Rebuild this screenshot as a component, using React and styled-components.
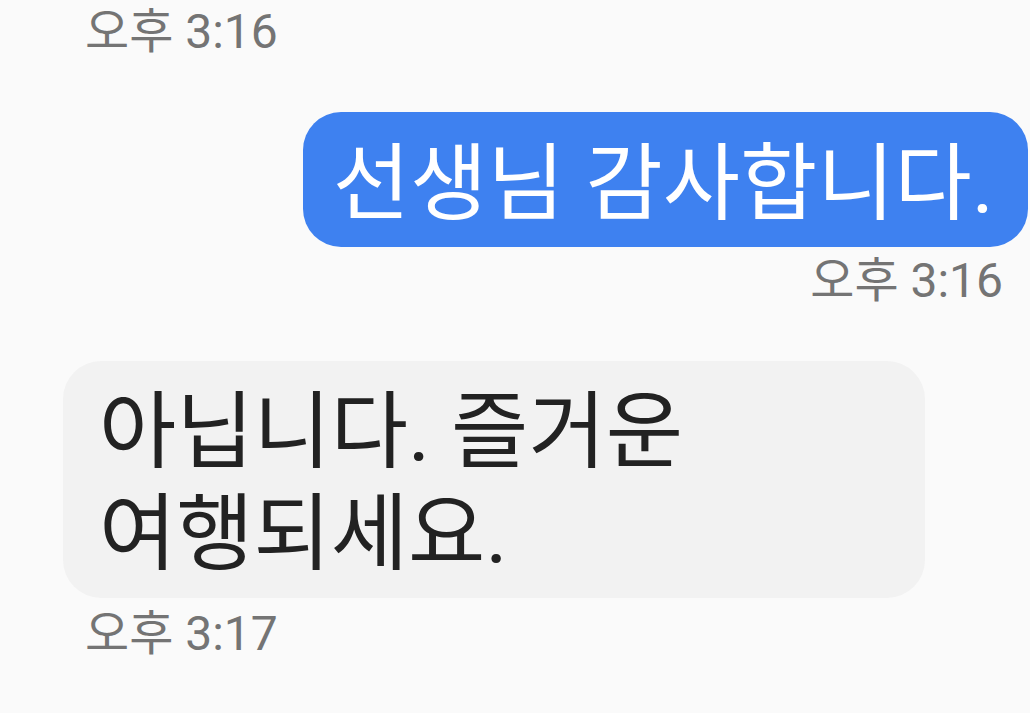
import React from "react";
import styled, { createGlobalStyle } from "styled-components";

const Global = createGlobalStyle`
  html, body { margin: 0; padding: 0; background: #fafafa; }
  body { font-family: Roboto, "Noto Sans CJK KR", sans-serif; }
`;

const Page = styled.div`
  width: 1030px;
  height: 713px;
  overflow: hidden;
  background: #fafafa;
  display: flex;
  flex-direction: column;
  box-sizing: border-box;
  padding: 0 2px 0 63px;
`;

const Time = styled.div`
  font-size: 48px;
  line-height: 56px;
  color: #747474;
  align-self: ${(p) => (p.$out ? "flex-end" : "flex-start")};
  margin: ${(p) => p.$m};
  ${(p) => (p.$out ? "margin-right: 25px;" : "margin-left: 22px;")}
`;

const Bubble = styled.div`
  align-self: ${(p) => (p.$out ? "flex-end" : "flex-start")};
  background: ${(p) => (p.$out ? "#3e81f0" : "#f2f2f2")};
  color: ${(p) => (p.$out ? "#ffffff" : "#222222")};
  border-radius: 38px;
  font-size: 84px;
  line-height: 102px;
  word-break: keep-all;
  box-sizing: border-box;
  padding: ${(p) => (p.$out ? "22px 34px 11px 30px" : "21px 36px 12px 36px")};
  max-width: 862px;
  ${(p) => (!p.$out ? "width: 862px;" : "")}
`;

export default function App() {
  return (
    <Page>
      <Global />
      <Time $m="4px 0 0 0">오후 3:16</Time>
      <Bubble $out style={{ marginTop: 52 }}>선생님 감사합니다.</Bubble>
      <Time $out $m="6px 0 0 0">오후 3:16</Time>
      <Bubble style={{ marginTop: 52 }}>아닙니다. 즐거운 여행되세요.</Bubble>
      <Time $m="8px 0 0 0">오후 3:17</Time>
    </Page>
  );
}
